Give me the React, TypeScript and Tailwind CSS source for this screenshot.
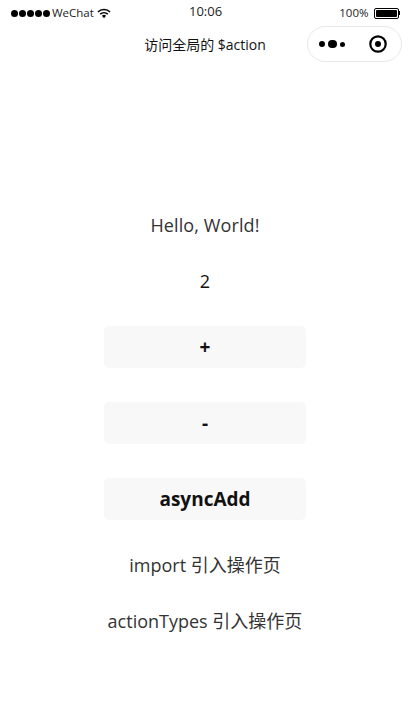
import React from "react";

const font = "font-['Open_Sans','Noto_Sans_CJK_SC',sans-serif]";

function StatusBar() {
  return (
    <div className="relative flex h-[26px] items-center justify-between pl-[11px] pr-[8px] text-[12px] text-[#222]">
      <div className="flex items-center">
        <div className="flex gap-[1px]">
          {[0, 1, 2, 3, 4].map((i) => (
            <span key={i} className="h-[7px] w-[7px] rounded-full bg-black" />
          ))}
        </div>
        <span className="ml-[2px] text-[11.5px]">WeChat</span>
        <svg width="14" height="11" viewBox="0 0 15 11" className="ml-[3px]">
          <path d="M1 4 A9 9 0 0 1 14 4" fill="none" stroke="#000" strokeWidth="1.6" />
          <path d="M3.4 6.2 A6 6 0 0 1 11.6 6.2" fill="none" stroke="#000" strokeWidth="1.6" />
          <path d="M5.3 8 A3.2 3.2 0 0 1 9.7 8 L7.5 10.5 Z" fill="#000" />
        </svg>
      </div>
      <span className="absolute left-[189px] top-[2px] text-[13px]">10:06</span>
      <div className="flex items-center">
        <span className="text-[11.5px]">100%</span>
        <div className="ml-[5px] flex h-[11px] w-[25px] items-center rounded-[2px] border border-black p-[1px]">
          <div className="h-full w-full rounded-[1px] bg-black" />
        </div>
        <div className="h-[4px] w-[1.5px] bg-black" />
      </div>
    </div>
  );
}

function NavBar() {
  return (
    <div className="relative mb-[2px] flex h-[36px] items-center justify-center pl-[2px] text-[14px] text-[#111]">
      <span>访问全局的 $action</span>
      <div className="absolute left-[307px] top-[0px] flex h-[36px] w-[95px] items-center rounded-full border border-[#e8e8e8] bg-white pl-[11px]">
        <div className="flex items-center gap-[3px]">
          <span className="h-[6px] w-[6px] rounded-full bg-black" />
          <span className="h-[8px] w-[9px] rounded-full bg-black" />
          <span className="h-[5px] w-[5px] rounded-full bg-black" />
        </div>
        <svg width="18" height="18" viewBox="0 0 18 18" className="ml-[24px]">
          <circle cx="9" cy="9" r="7.7" fill="none" stroke="#000" strokeWidth="2.2" />
          <circle cx="9" cy="9" r="3" fill="#000" />
        </svg>
      </div>
    </div>
  );
}

function ActionButton({ label }: { label: string }) {
  return (
    <button className="flex h-[42px] w-[202px] items-center justify-center rounded-[5px] bg-[#f8f8f8] text-[19px] font-bold text-[#111]">
      {label}
    </button>
  );
}

export default function App() {
  return (
    <div className={`h-[728px] w-[408px] overflow-hidden bg-white ${font}`}>
      <StatusBar />
      <NavBar />
      <div className="flex flex-col items-center pl-[2px] pt-[147px] text-[18px] leading-[28px] text-[#333]">
        <p className="tracking-[0.1px]">Hello, World!</p>
        <p className="mt-[28px] text-[#111]">2</p>
        <div className="mt-[31px] flex flex-col gap-[34px]">
          <ActionButton label="+" />
          <ActionButton label="-" />
          <ActionButton label="asyncAdd" />
        </div>
        <p className="mt-[31px]">import 引入操作页</p>
        <p className="mt-[28px]">actionTypes 引入操作页</p>
      </div>
    </div>
  );
}
